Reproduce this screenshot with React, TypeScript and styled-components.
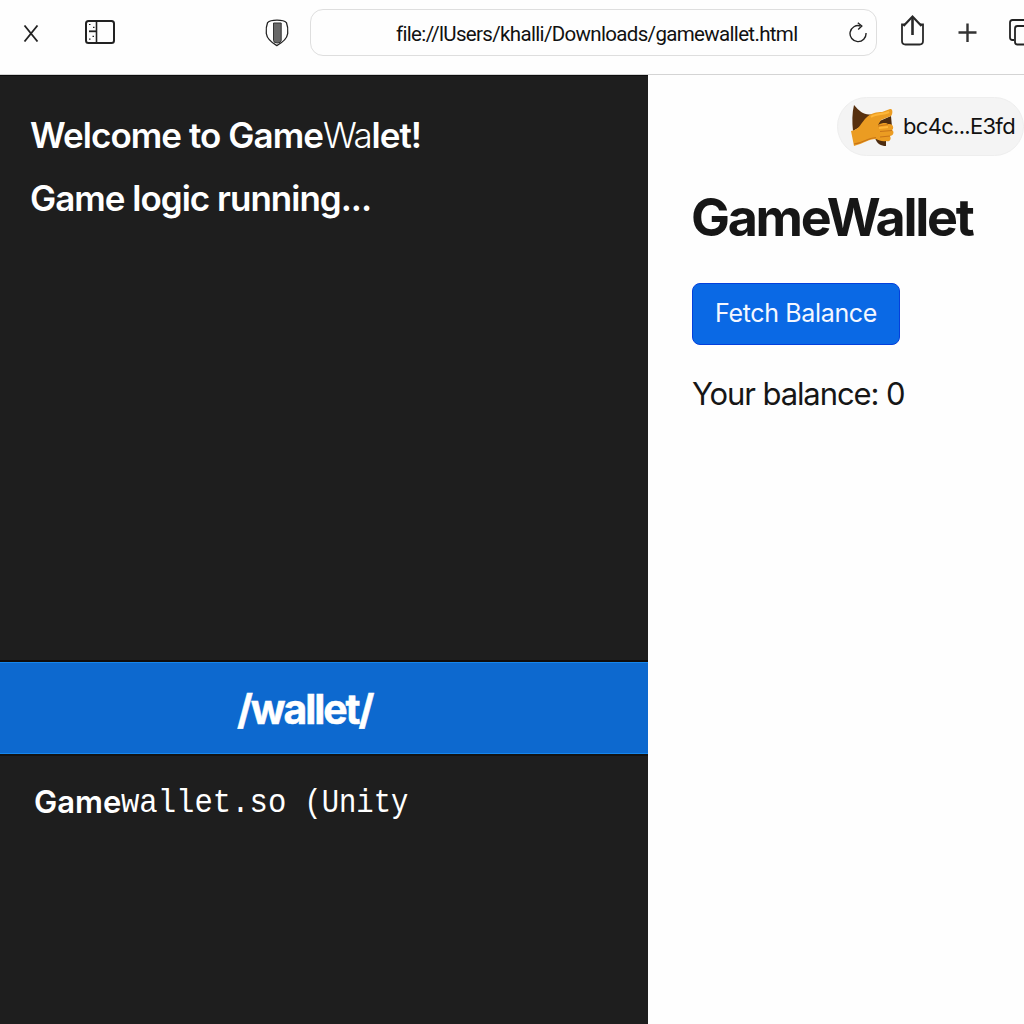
import React from "react";
import styled, { createGlobalStyle } from "styled-components";

const GlobalStyle = createGlobalStyle`
  * { box-sizing: border-box; }
  body { margin: 0; background: #fefefe; font-family: Inter, "Liberation Sans", sans-serif; }
`;

const Window = styled.div`
  width: 1024px;
  height: 1024px;
  display: flex;
  flex-direction: column;
  overflow: hidden;
  background: #fefefe;
  white-space: nowrap;
`;

const Toolbar = styled.header`
  height: 75px;
  flex: none;
  display: flex;
  align-items: flex-start;
  border-bottom: 1px solid #d4d4d4;
`;

const ToolIcon = styled.svg<{ $left: number; $top: number }>`
  flex: none;
  display: block;
  fill: none;
  margin-left: ${(p) => p.$left}px;
  margin-top: ${(p) => p.$top}px;
`;

const AddressBar = styled.div`
  flex: none;
  display: flex;
  width: 567px;
  height: 47px;
  margin: 9px 0 0 21px;
  padding-left: 85px;
  border: 1px solid #dedede;
  border-radius: 13px;
`;

const Address = styled.span`
  width: 402px;
  font-family: Roboto, Inter, sans-serif;
  font-size: 20.5px;
  line-height: 48px;
  letter-spacing: -0.66px;
  color: #111;
`;

const Body = styled.div`
  flex: 1;
  display: flex;
`;

const GamePane = styled.main`
  width: 648px;
  display: flex;
  flex-direction: column;
  background: #1e1e1e;
  color: #fff;
  border-top: 1px solid #0c0c0c;
`;

const Log = styled.section`
  height: 586px;
  padding: 28px 30px;
  border-bottom: 2px solid #100c0a;
`;

const LogLine = styled.p<{ $spacing: number }>`
  margin: 0;
  height: 63px;
  font-size: 35px;
  line-height: 62px;
  font-weight: 600;
  letter-spacing: ${(p) => p.$spacing}px;
`;

const Thin = styled.span`
  font-weight: 300;
  letter-spacing: -1.4px;
`;

const RouteBar = styled.div`
  height: 92px;
  padding-left: 237px;
  background: #0d69cf;
  border-top: 1px solid #1686ec;
  border-bottom: 1px solid #1686ec;
  font-size: 41px;
  line-height: 92px;
  font-weight: 700;
  letter-spacing: -2.1px;
  -webkit-text-stroke: 0.5px #fff;
`;

const FileLine = styled.p`
  display: flex;
  margin: 0;
  padding: 21px 0 0 34px;
  border-top: 2px solid #141210;
  line-height: 50px;
`;

const FileStem = styled.span`
  width: 87px;
  font-size: 31px;
  font-weight: 600;
`;

const FileRest = styled.span<{ $width: number; $condense: number }>`
  width: ${(p) => p.$width}px;
  padding-top: 1px;
  font-family: "Liberation Mono", monospace;
  font-size: 34px;
  transform: scaleX(${(p) => p.$condense});
  transform-origin: left;
`;

const WalletPane = styled.aside`
  flex: 1;
  display: flex;
  flex-direction: column;
  align-items: flex-start;
  padding: 22px 0 0 44px;
  color: #161616;
`;

const Account = styled.div`
  display: flex;
  align-items: center;
  align-self: flex-end;
  width: 187px;
  height: 59px;
  padding-left: 13px;
  border-radius: 30px;
  border: 1px solid #eee;
  background: #f4f4f4;
  font-size: 22px;
  color: #111;
`;

const AccountId = styled.span`
  margin: -2px 0 0 8px;
  letter-spacing: -0.7px;
`;

const Title = styled.h1`
  margin: 27px 0 0 -1px;
  font-size: 52px;
  line-height: 70px;
  font-weight: 700;
  letter-spacing: -2.3px;
`;

const FetchButton = styled.button`
  margin: 30px 0 0;
  width: 208px;
  height: 62px;
  padding: 0 0 2px;
  border: 1px solid #0440dc;
  border-radius: 8px;
  background: #0a69e5;
  color: #f4f7ff;
  font: 400 25px Inter, sans-serif;
  letter-spacing: -0.35px;
`;

const Balance = styled.p`
  margin: 24px 0 0;
  font-size: 31px;
  line-height: 50px;
  letter-spacing: -1.1px;
`;

const Close = () => (
  <ToolIcon $left={23} $top={25} width="16" height="17" stroke="#222" strokeWidth="1.8">
    <path d="M1.500 .5 14.500 16.500M14.500 .5 1.500 16.500" />
  </ToolIcon>
);

const Sidebar = () => (
  <ToolIcon $left={45} $top={19} width="32" height="26" stroke="#222">
    <rect x="2" y="2" width="28" height="22" rx="2.5" strokeWidth="2" />
    <path d="M12.5 2v22" strokeWidth="1.6" />
    <path d="M5 12.3h7" strokeWidth="1.8" />
    <path d="M5 5.5h1.5M9 8.3h1.5M8.5 17.3H10M5 20.2h1.5" strokeWidth="1.2" />
  </ToolIcon>
);

const Shield = () => (
  <ToolIcon $left={149} $top={19} width="24" height="28" stroke="#222" strokeWidth="1.3">
    <path d="M12 1.2C8 1.2 4.5 1.6 2.6 3.6C1.2 7 1 11 1.3 14.5C2 20 6.5 23.5 11.8 26.6C17.5 23.5 22 20 22.7 14.5C23 11 22.8 7 21.4 3.6C19.5 1.6 16 1.2 12 1.2Z" />
    <path d="M8.5 4h7.7v17.5q0 2.5-3.8 2.5t-3.9-2.5Z" fill="#686868" stroke="#333" strokeWidth="1" />
  </ToolIcon>
);

const Reload = () => (
  <ToolIcon $left={51} $top={12} width="20" height="22" stroke="#222" strokeWidth="1.4">
    <path d="M11.5 4A8 8 0 1 0 17 11" />
    <path d="M8.8.8 12.8 4 9.2 7.5" />
  </ToolIcon>
);

const Share = () => (
  <ToolIcon $left={23} $top={13} width="26" height="34" stroke="#282828">
    <path d="M5 11.5H2V28q0 3.5 3.5 3.5h14q3.5 0 3.5-3.5V11.5h-3" strokeWidth="1.8" />
    <path d="M3.5 13 12.5 3.5l9 9.5" strokeWidth="2.2" />
    <path d="M12.5 4v18" strokeWidth="2.6" />
  </ToolIcon>
);

const Plus = () => (
  <ToolIcon $left={32} $top={23} width="20" height="20" stroke="#333" strokeWidth="2.4">
    <path d="M.5 9.5h18M9.500 .5v18.500" />
  </ToolIcon>
);

const Tabs = () => (
  <ToolIcon $left={30} $top={18} width="28" height="28" stroke="#222" strokeWidth="1.8">
    <path d="M6 22H4.5Q2 22 2 19.5V4.5Q2 2 4.5 2H20" />
    <rect x="7" y="8" width="22" height="18.5" rx="2.5" />
  </ToolIcon>
);

const HandAvatar = () => (
  <svg width="44" height="46" viewBox="0 0 44 46">
    <path d="M3 1C9 8 14 12 22 10L14 20 2 27C1 18 1 9 3 1Z" fill="#57300f" />
    <path d="M24 19 40 12 41 23 26 26ZM24 34 35 36V42C30 42 26 40 24 34Z" fill="#4d2c10" />
    <path d="M0 27C9 26 10 18 16 13C20 9 26 8 31 8L39 5C42 4 42 10 40 12L30 16 27 21C32 18 36 19 37 20C43 19 43 25 41 26C44 28 42 32 39 32C41 36 38 38 35 37C31 38 28 36 25 35C17 35 14 39 3 42Z" fill="#eb9c22" />
    <path d="M3 40C13 39 15 34 25 33.500M27 22 37 20.500M29 27.500 41 26.500M29 33 39 32" fill="none" stroke="#c87518" strokeWidth="1.1" />
    <path d="M20 13C26 9 32 11 38 8M28 24 37 23" fill="none" stroke="#ffb638" strokeWidth="2" />
  </svg>
);

export default function App() {
  return (
    <>
      <GlobalStyle />
      <Window>
        <Toolbar>
          <Close />
          <Sidebar />
          <Shield />
          <AddressBar>
            <Address>file://lUsers/khalli/Downloads/gamewallet.html</Address>
            <Reload />
          </AddressBar>
          <Share />
          <Plus />
          <Tabs />
        </Toolbar>
        <Body>
          <GamePane>
            <Log>
              <LogLine $spacing={-0.95}>
                Welcome to Game<Thin>Wa</Thin>let!
              </LogLine>
              <LogLine $spacing={-1}>Game logic running...</LogLine>
            </Log>
            <RouteBar>/wallet/</RouteBar>
            <FileLine>
              <FileStem>Game</FileStem>
              <FileRest $width={166} $condense={0.9}>wallet.so</FileRest>
              <FileRest $width={122} $condense={0.85}>&nbsp;(Unity</FileRest>
            </FileLine>
          </GamePane>
          <WalletPane>
            <Account>
              <HandAvatar />
              <AccountId>bc4c...E3fd</AccountId>
            </Account>
            <Title>GameWallet</Title>
            <FetchButton>Fetch Balance</FetchButton>
            <Balance>Your balance: 0</Balance>
          </WalletPane>
        </Body>
      </Window>
    </>
  );
}
